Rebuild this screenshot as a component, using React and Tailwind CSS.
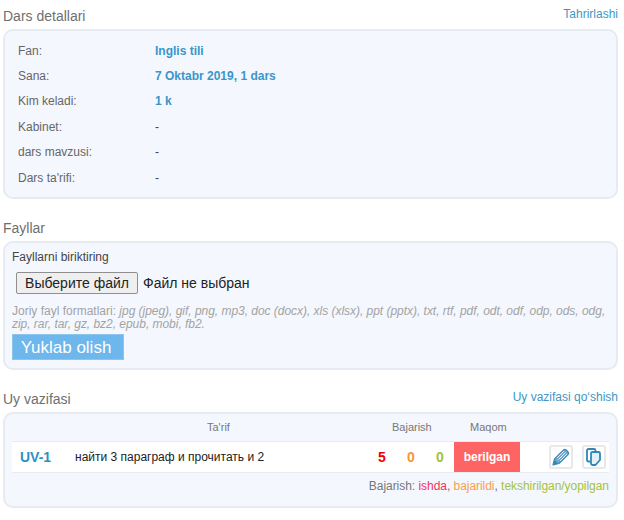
const rows = [
  ["Fan:", "Inglis tili"],
  ["Sana:", "7 Oktabr 2019, 1 dars"],
  ["Kim keladi:", "1 k"],
  ["Kabinet:", "-"],
  ["dars mavzusi:", "-"],
  ["Dars ta'rifi:", "-"],
];

function PencilIcon() {
  return (
    <svg width="20" height="20" viewBox="0 0 20 20">
      <path d="M2 18l1.5-6L12.5 3a2 2 0 0 1 2.6 0l2 2a2 2 0 0 1 0 2.6L8 16.5z" fill="#6fa8cc" stroke="#3d8ab5" strokeWidth="1.2" strokeLinejoin="round" />
      <path d="M6 11l7-7M7.5 12.5l7-7M9 14l7-7" stroke="#e8f2f8" strokeWidth="1" fill="none" />
      <path d="M2 18l1.5-5 3.5 3.5z" fill="#2f87b8" />
    </svg>
  );
}

function CopyIcon() {
  return (
    <svg width="20" height="20" viewBox="0 0 20 20" fill="none" stroke="#2f87b8" strokeWidth="1.8" strokeLinejoin="round">
      <path d="M6 14.5H4.5a1.5 1.5 0 0 1-1.5-1.5V3.5A1.5 1.5 0 0 1 4.5 2H10a1.5 1.5 0 0 1 1.5 1.5V5" />
      <path d="M7 6.5A1.5 1.5 0 0 1 8.5 5h6A1.5 1.5 0 0 1 16 6.5V13l-4.5 5h-3A1.5 1.5 0 0 1 7 16.5z" fill="#e4f0f7" />
    </svg>
  );
}

function SectionHead({ title, action, className }) {
  return (
    <div className={"flex items-start justify-between pl-[3px] pr-[6px] " + className}>
      <h2 className="text-[14px] leading-[18px] font-normal text-[#6f6f6f]">{title}</h2>
      {action ? <a className="text-[12px] leading-[14px] text-[#3f97c4]">{action}</a> : null}
    </div>
  );
}

export default function App() {
  return (
    <div className="w-[624px] h-[520px] overflow-hidden bg-white pt-[7px] font-['Liberation_Sans',Arial,sans-serif] text-[12px]">
      <SectionHead title="Dars detallari" action="Tahrirlashi" className="h-[22px]" />
      <section className="ml-[3px] w-[615px] h-[170px] rounded-[10px] border-2 border-[#e6ebf2] bg-[#f4f7fe] pl-[13px] pt-[7px]">
        {rows.map(([label, value]) => (
          <div key={label} className="flex h-[25.4px] items-center">
            <span className="w-[137px] text-[#666]">{label}</span>
            <span className={value === "-" ? "text-[#444]" : "font-bold text-[#3a96c8]"}>{value}</span>
          </div>
        ))}
      </section>

      <SectionHead title="Fayllar" className="mt-[20px] h-[22px]" />
      <section className="ml-[3px] w-[615px] h-[129px] rounded-[10px] border-2 border-[#e6ebf2] bg-[#f4f7fe] pl-[7px] pt-[7px]">
        <p className="text-[12px] leading-[14px] text-[#444]">Fayllarni biriktiring</p>
        <div className="mt-[8px] ml-[4px] flex items-center">
          <button className="h-[22px] w-[122px] rounded-[2px] border border-[#8f8f8f] bg-[#efefef] text-[14px] leading-none text-[#222]">Выберите файл</button>
          <span className="ml-[5px] text-[14px] leading-none text-[#222]">Файл не выбран</span>
        </div>
        <p className="mt-[11px] w-[600px] text-[12px] leading-[13px] text-[#a3a3a3]">
          Joriy fayl formatlari: <i className="tracking-[-0.03px]">jpg (jpeg), gif, png, mp3, doc (docx), xls (xlsx), ppt (pptx), txt, rtf, pdf, odt, odf, odp, ods, odg, zip, rar, tar, gz, bz2, epub, mobi, fb2.</i>
        </p>
        <button className="mt-[3px] block h-[26px] w-[112px] border border-[#8cc4ea] bg-[#6db7ec] pr-[4px] text-[17px] leading-none text-white">Yuklab olish</button>
      </section>

      <SectionHead title="Uy vazifasi" action="Uy vazifasi qo‘shish" className="mt-[20px] h-[22px]" />
      <section className="ml-[3px] w-[615px] h-[96px] rounded-[10px] border-2 border-[#e6ebf2] bg-[#f4f7fe] pl-[7px] pr-[7px]">
        <div className="flex h-[27px] items-center text-[11px] text-[#777] w-[597px]">
          <span className="w-[350px] pl-[195px]">Ta'rif</span>
          <span className="w-[94px] pl-[30px]">Bajarish</span>
          <span className="pl-[14px]">Maqom</span>
        </div>
        <div className="flex h-[32px] w-[597px] items-stretch border-y border-[#e8ebef] bg-white">
          <span className="flex w-[63px] items-center pl-[8px] text-[14px] font-bold text-[#2f8fc4]">UV-1</span>
          <span className="flex w-[292px] items-center text-[12px] text-[#222]">найти 3 параграф и прочитать и 2</span>
          <span className="flex w-[87px] items-center pl-[11px] text-[14px] font-bold">
            <span className="w-[29px] text-[#f00000]">5</span>
            <span className="w-[29px] text-[#f7953b]">0</span>
            <span className="text-[#a5c23a]">0</span>
          </span>
          <span className="flex w-[66px] items-center justify-center bg-[#ff6464] text-[12px] font-bold text-white">berilgan</span>
          <span className="flex flex-1 items-center gap-[9px] pl-[29px]">
            <span className="flex h-[24px] w-[24px] items-center justify-center rounded-[3px] border-2 border-[#e8e8e8]"><PencilIcon /></span>
            <span className="flex h-[24px] w-[24px] items-center justify-center rounded-[3px] border-2 border-[#e8e8e8]"><CopyIcon /></span>
          </span>
        </div>
        <p className="mt-[6px] w-[597px] text-right text-[12px] leading-[14px] tracking-[-0.04px] text-[#777]">
          Bajarish: <span className="text-[#f5325a]">ishda</span>, <span className="text-[#f7a04b]">bajarildi</span>, <span className="text-[#a5c23a]">tekshirilgan/yopilgan</span>
        </p>
      </section>
    </div>
  );
}
